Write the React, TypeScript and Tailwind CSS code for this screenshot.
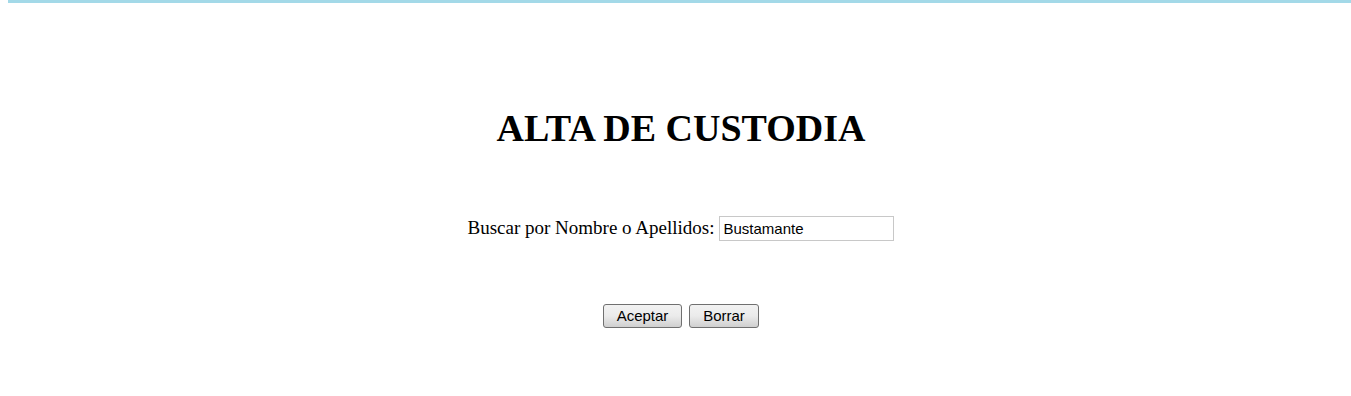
export default function App() {
  return (
    <div className="w-[1351px] h-[396px] bg-white relative overflow-hidden" style={{ fontFamily: '"Liberation Serif", serif' }}>
      <div className="ml-[8px] h-[3px] bg-[#a3d9e8]" />
      <div className="flex flex-col items-center pl-[11px]">
        <h1 className="mt-[103px] text-[38px] leading-[44px] font-bold text-black">ALTA DE CUSTODIA</h1>
        <div className="mt-[64px] flex items-center text-[19px] text-black">
          <span>Buscar por Nombre o Apellidos:</span>
          <input
            defaultValue="Bustamante"
            className="ml-[5px] w-[175px] h-[25px] border border-[#c8c8c8] px-[3px] text-black outline-none"
            style={{ fontFamily: '"Liberation Sans", sans-serif', fontSize: '15px' }}
          />
        </div>
        <div className="mt-[61px] flex gap-[7px]">
          <button
            className="h-[24px] w-[79px] rounded-[3px] border border-[#707070] bg-gradient-to-b from-[#f2f2f2] via-[#ebebeb] to-[#cfcfcf] text-black"
            style={{ fontFamily: '"Liberation Sans", sans-serif', fontSize: '15px' }}
          >
            Aceptar
          </button>
          <button
            className="h-[24px] w-[70px] rounded-[3px] border border-[#707070] bg-gradient-to-b from-[#f2f2f2] via-[#ebebeb] to-[#cfcfcf] text-black"
            style={{ fontFamily: '"Liberation Sans", sans-serif', fontSize: '15px' }}
          >
            Borrar
          </button>
        </div>
      </div>
    </div>
  );
}
